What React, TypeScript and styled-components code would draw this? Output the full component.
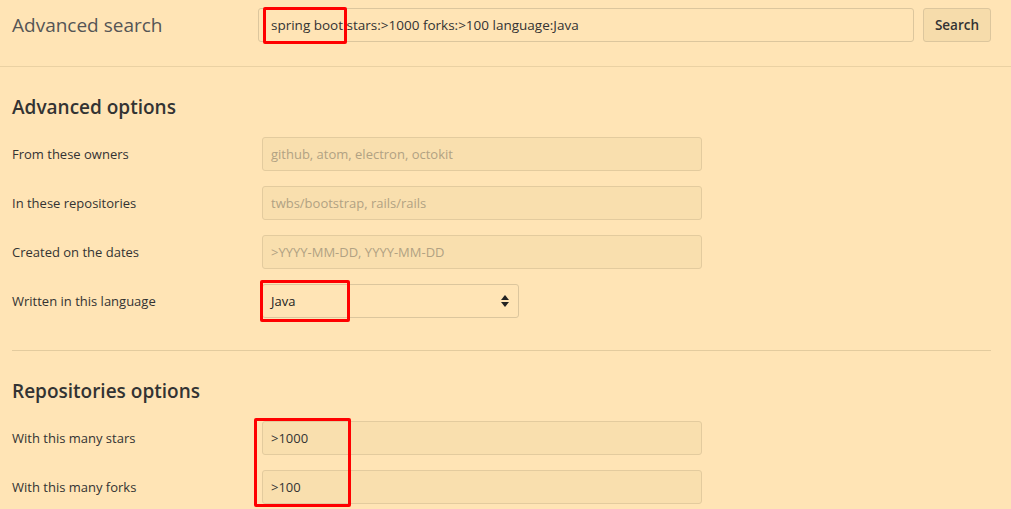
import styled, { createGlobalStyle } from "styled-components";

const GlobalStyle = createGlobalStyle`
    html, body {
        margin: 0;
        padding: 0;
        background: #ffe4b5;
    }
    body {
        font-family: "Open Sans", "Noto Sans", sans-serif;
        color: #333;
    }
`

const SelectArrows = () => (
    <svg width="8" height="12" viewBox="0 0 8 12">
        <path d="M0 5 L4 0 L8 5 Z" fill="#222"/>
        <path d="M0 7 L4 12 L8 7 Z" fill="#222"/>
    </svg>
);

type Field = { label: string; placeholder?: string; value?: string };

const ownerFields: Field[] = [
    {label: "From these owners", placeholder: "github, atom, electron, octokit"},
    {label: "In these repositories", placeholder: "twbs/bootstrap, rails/rails"},
    {label: "Created on the dates", placeholder: ">YYYY-MM-DD, YYYY-MM-DD"},
];

const repoFields: Field[] = [
    {label: "With this many stars", value: ">1000"},
    {label: "With this many forks", value: ">100"},
];

export default function App() {
    return (
        <Page>
            <GlobalStyle/>
            <StyledHeader>
                <StyledTitle>Advanced search</StyledTitle>
                <SearchBox>
                    <SearchInput>spring boot stars:&gt;1000 forks:&gt;100 language:Java</SearchInput>
                    <Mark style={{left: 5, top: -1, width: 84, height: 37}}/>
                </SearchBox>
                <SearchButton>Search</SearchButton>
            </StyledHeader>

            <Section>
                <SectionTitle>Advanced options</SectionTitle>
                <Rows>
                    {ownerFields.map((f) => (
                        <Row key={f.label}>
                            <Label>{f.label}</Label>
                            <TextField $muted>{f.placeholder}</TextField>
                        </Row>
                    ))}
                    <Row>
                        <Label>Written in this language</Label>
                        <SelectBox>
                            <span>Java</span>
                            <SelectArrows/>
                            <Mark style={{left: -3, top: -5, width: 90, height: 42}}/>
                        </SelectBox>
                    </Row>
                </Rows>
                <Divider/>
            </Section>

            <Section $second>
                <SectionTitle>Repositories options</SectionTitle>
                <Rows>
                    {repoFields.map((f) => (
                        <Row key={f.label}>
                            <Label>{f.label}</Label>
                            <TextField>{f.value}</TextField>
                        </Row>
                    ))}
                    <Mark style={{left: 242, top: -3, width: 97, height: 89}}/>
                </Rows>
            </Section>
        </Page>
    );
}

const Page = styled.div`
    width: 1011px;
    min-height: 509px;
    background: #ffe4b5;
    overflow: hidden;
`

const StyledHeader = styled.div`
    display: flex;
    align-items: center;
    padding: 8px 20px 24px 12px;
    border-bottom: 1px solid #ead1a3;
`

const StyledTitle = styled.h1`
    width: 246px;
    margin: 0;
    font-size: 19px;
    font-weight: 400;
    color: #555;
`

const SearchBox = styled.div`
    position: relative;
    flex: 1;
`

const SearchInput = styled.div`
    box-sizing: border-box;
    height: 34px;
    padding: 0 12px;
    display: flex;
    align-items: center;
    border: 1px solid #dcc69d;
    border-radius: 3px;
    background: #ffe4b5;
    font-size: 13.5px;
    color: #333;
    white-space: nowrap;
`

const SearchButton = styled.div`
    box-sizing: border-box;
    width: 68px;
    height: 34px;
    margin-left: 9px;
    display: flex;
    align-items: center;
    justify-content: center;
    border: 1px solid #dcc69d;
    border-radius: 3px;
    background: #f6dcab;
    font-size: 13.5px;
    font-weight: 600;
    color: #333;
`

const Section = styled.div<{ $second?: boolean }>`
    padding: ${(p) => (p.$second ? "28px" : "28px")} 20px 0 12px;
`

const SectionTitle = styled.h2<{ $tight?: boolean }>`
    margin: 0 0 18px;
    font-size: 19px;
    line-height: 24px;
    font-weight: 600;
    color: #333;
`

const Rows = styled.div`
    position: relative;
    display: flex;
    flex-direction: column;
    gap: 15px;
`

const Row = styled.div`
    display: flex;
    align-items: center;
`

const Label = styled.div`
    width: 250px;
    font-size: 13px;
    color: #333;
`

const TextField = styled.div<{ $muted?: boolean }>`
    box-sizing: border-box;
    width: 440px;
    height: 34px;
    padding: 0 8px;
    display: flex;
    align-items: center;
    border: 1px solid #e3cb9e;
    border-radius: 3px;
    background: #f9dfae;
    font-size: 13px;
    color: ${(p) => (p.$muted ? "#b1a283" : "#333")};
`

const SelectBox = styled.div`
    position: relative;
    box-sizing: border-box;
    width: 257px;
    height: 34px;
    padding: 0 9px 0 8px;
    display: flex;
    align-items: center;
    justify-content: space-between;
    border: 1px solid #dcc69d;
    border-radius: 3px;
    background: #ffe4b5;
    font-size: 13px;
    color: #222;
`

const Divider = styled.div`
    height: 1px;
    margin-top: 32px;
    background: #e3cb9e;
`

const Mark = styled.div`
    position: absolute;
    box-sizing: border-box;
    border: 3px solid #ff0000;
    border-radius: 2px;
    pointer-events: none;
`
